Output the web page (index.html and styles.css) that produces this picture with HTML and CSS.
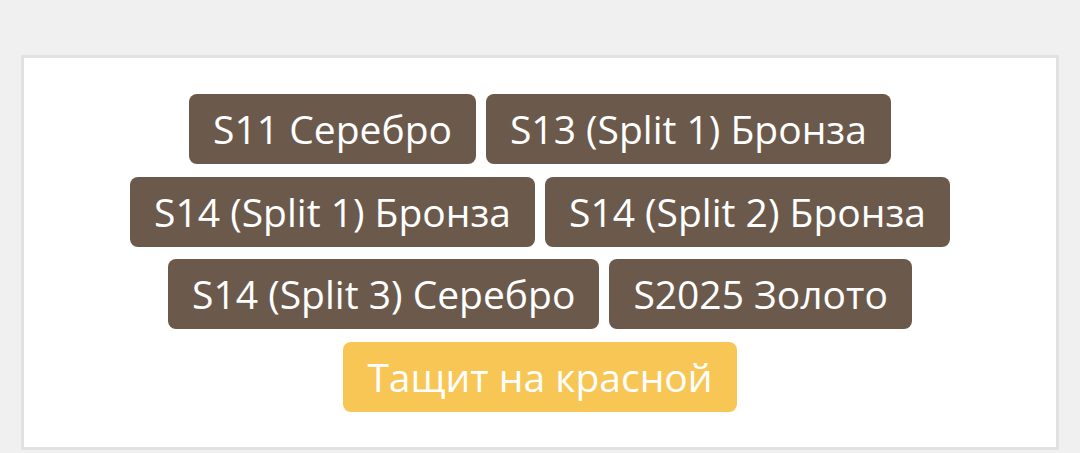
FILE: index.html
```html
<!DOCTYPE html>
<html lang="ru">
<head>
<meta charset="utf-8">
<link rel="stylesheet" href="styles.css">
</head>
<body>
<div class="card">
  <div class="tags">
    <span class="tag">S11 Серебро</span>
    <span class="tag">S13 (Split 1) Бронза</span>
    <span class="tag">S14 (Split 1) Бронза</span>
    <span class="tag">S14 (Split 2) Бронза</span>
    <span class="tag">S14 (Split 3) Серебро</span>
    <span class="tag">S2025 Золото</span>
    <span class="tag tag-yellow">Тащит на красной</span>
  </div>
</div>
</body>
</html>
```
FILE: styles.css
```css
html, body {
  margin: 0;
  padding: 0;
  background: #f0f0f0;
}
body {
  padding: 55px 21px 3px 21px;
  font-family: "Open Sans", "Liberation Sans", sans-serif;
}
.card {
  background: #ffffff;
  border: 3px solid #e2e2e2;
  padding: 36px 24px 35px;
}
.tags {
  display: flex;
  flex-wrap: wrap;
  justify-content: center;
  gap: 12.6px 10px;
}
.tag {
  display: inline-block;
  background: #6b5a4c;
  color: #ffffff;
  font-size: 39px;
  line-height: 50px;
  padding: 10px 24px;
  border-radius: 8px;
  white-space: nowrap;
}
.tag-yellow {
  background: #f8c655;
}
```
